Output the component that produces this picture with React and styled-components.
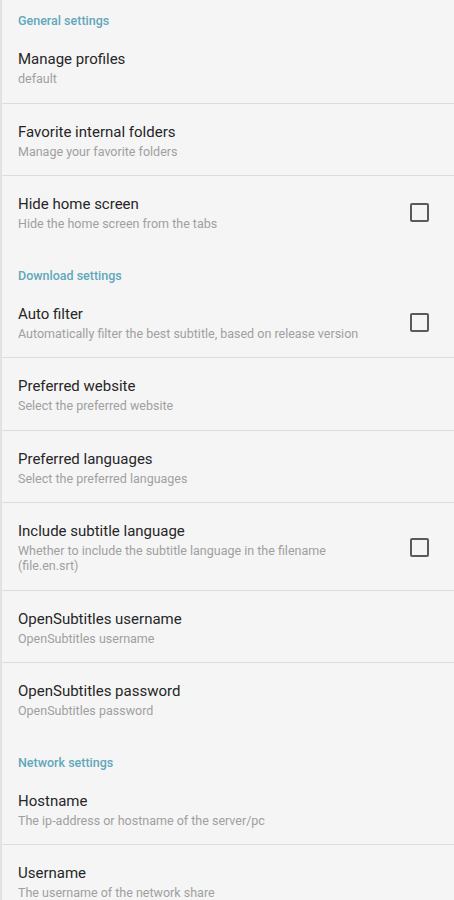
import React from 'react'
import styled, { createGlobalStyle } from 'styled-components'

const GlobalStyle = createGlobalStyle`
  html, body {
    margin: 0;
    padding: 0;
    background: #f5f5f5;
  }
  body {
    font-family: Roboto, "Liberation Sans", sans-serif;
  }
`

const Page = styled.div`
  min-height: 900px;
  background: #f5f5f5;
  border-left: 2px solid #e2e2e2;
  box-sizing: border-box;
`

const Category = styled.div`
  padding: 19px 18px 2px 16px;
  font-size: 12.5px;
  line-height: 16px;
  font-weight: 500;
  color: #5fa8ba;

  &:first-child {
    padding-top: 13px;
  }
`

const Row = styled.div`
  display: flex;
  align-items: center;
  padding: 18px 25px 16.5px 16px;
  border-bottom: ${p => (p.$divider ? '1px solid #dcdcdc' : '1px solid transparent')};
`

const Texts = styled.div`
  flex: 1;
  min-width: 0;
  padding-right: 28px;
`

const Title = styled.div`
  font-size: 15px;
  line-height: 20px;
  color: #262626;
  margin-bottom: 2px;
`

const Summary = styled.div`
  font-size: 12.5px;
  line-height: 15px;
  color: #a0a0a0;
`

const Box = styled.div`
  width: 15px;
  height: 15px;
  border: 2px solid #5a5a5a;
  border-radius: 2px;
  flex-shrink: 0;
`

const sections = [
  {
    name: 'General settings',
    items: [
      { title: 'Manage profiles', summary: 'default' },
      { title: 'Favorite internal folders', summary: 'Manage your favorite folders' },
      { title: 'Hide home screen', summary: 'Hide the home screen from the tabs', check: true },
    ],
  },
  {
    name: 'Download settings',
    items: [
      { title: 'Auto filter', summary: 'Automatically filter the best subtitle, based on release version', check: true },
      { title: 'Preferred website', summary: 'Select the preferred website' },
      { title: 'Preferred languages', summary: 'Select the preferred languages' },
      { title: 'Include subtitle language', summary: 'Whether to include the subtitle language in the filename (file.en.srt)', check: true },
      { title: 'OpenSubtitles username', summary: 'OpenSubtitles username' },
      { title: 'OpenSubtitles password', summary: 'OpenSubtitles password' },
    ],
  },
  {
    name: 'Network settings',
    items: [
      { title: 'Hostname', summary: 'The ip-address or hostname of the server/pc' },
      { title: 'Username', summary: 'The username of the network share' },
    ],
  },
]

export default function App() {
  return (
    <Page>
      <GlobalStyle />
      {sections.map(section => (
        <React.Fragment key={section.name}>
          <Category>{section.name}</Category>
          {section.items.map((item, i) => (
            <Row key={item.title} $divider={i < section.items.length - 1}>
              <Texts>
                <Title>{item.title}</Title>
                <Summary>{item.summary}</Summary>
              </Texts>
              {item.check && <Box />}
            </Row>
          ))}
        </React.Fragment>
      ))}
    </Page>
  )
}
